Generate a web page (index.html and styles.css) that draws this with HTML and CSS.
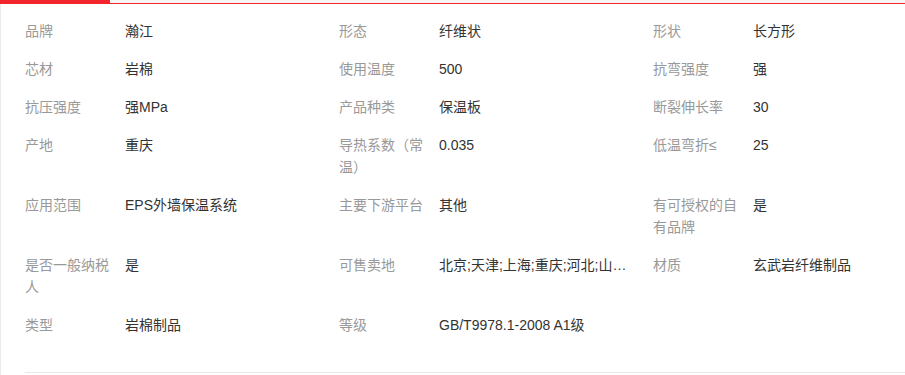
FILE: index.html
```html
<!DOCTYPE html>
<html lang="zh-CN">
<head>
  <meta charset="UTF-8" />
  <meta name="viewport" content="width=device-width, initial-scale=1.0" />
  <title>产品参数</title>
  <link rel="stylesheet" href="styles.css">
</head>
<body>
  <div class="tabs">
    <div class="tab-active"></div>
    <div class="tab-rest"></div>
  </div>

  <div class="panel">
    <div class="attrs">
      <div class="attr"><span class="attr-name">品牌</span><span class="attr-value">瀚江</span></div>
      <div class="attr"><span class="attr-name">形态</span><span class="attr-value">纤维状</span></div>
      <div class="attr"><span class="attr-name">形状</span><span class="attr-value">长方形</span></div>

      <div class="attr"><span class="attr-name">芯材</span><span class="attr-value">岩棉</span></div>
      <div class="attr"><span class="attr-name">使用温度</span><span class="attr-value">500</span></div>
      <div class="attr"><span class="attr-name">抗弯强度</span><span class="attr-value">强</span></div>

      <div class="attr"><span class="attr-name">抗压强度</span><span class="attr-value">强MPa</span></div>
      <div class="attr"><span class="attr-name">产品种类</span><span class="attr-value">保温板</span></div>
      <div class="attr"><span class="attr-name">断裂伸长率</span><span class="attr-value">30</span></div>

      <div class="attr"><span class="attr-name">产地</span><span class="attr-value">重庆</span></div>
      <div class="attr"><span class="attr-name">导热系数（常温）</span><span class="attr-value">0.035</span></div>
      <div class="attr"><span class="attr-name">低温弯折≤</span><span class="attr-value">25</span></div>

      <div class="attr"><span class="attr-name">应用范围</span><span class="attr-value">EPS外墙保温系统</span></div>
      <div class="attr"><span class="attr-name">主要下游平台</span><span class="attr-value">其他</span></div>
      <div class="attr"><span class="attr-name">有可授权的自有品牌</span><span class="attr-value">是</span></div>

      <div class="attr"><span class="attr-name">是否一般纳税人</span><span class="attr-value">是</span></div>
      <div class="attr"><span class="attr-name">可售卖地</span><span class="attr-value one-line" title="北京;天津;上海;重庆;河北;山西;内蒙古">北京;天津;上海;重庆;河北;山西;内蒙古</span></div>
      <div class="attr"><span class="attr-name">材质</span><span class="attr-value">玄武岩纤维制品</span></div>

      <div class="attr"><span class="attr-name">类型</span><span class="attr-value">岩棉制品</span></div>
      <div class="attr"><span class="attr-name">等级</span><span class="attr-value">GB/T9978.1-2008 A1级</span></div>
    </div>
  </div>
</body>
</html>
```

FILE: styles.css
```css
body {
  margin: 0;
  font-family: "Liberation Sans", "Noto Sans CJK SC", sans-serif;
  font-size: 14px;
  background: #fff;
  overflow: hidden;
}

/* tab strip */
.tabs {
  display: flex;
  height: 4px;
}
.tab-active {
  width: 110px;
  background: #f1252b;
}
.tab-rest {
  flex: 1;
  background: #f5f5f5;
  border-bottom: 1px solid #f1252b;
  box-sizing: border-box;
}

.panel {
  border-left: 1px solid #ebebeb;
  padding-top: 16px;
  height: 371px;
  box-sizing: border-box;
}

.attrs {
  display: grid;
  grid-template-columns: 314px 314px 1fr;
  row-gap: 16px;
  margin-left: 24px;
  padding-bottom: 36px;
  border-bottom: 1px solid #e8e8e8;
}

.attr {
  display: flex;
  line-height: 22px;
}
.attr-name {
  width: 90px;
  padding-right: 10px;
  flex-shrink: 0;
  color: #999;
}
.attr-value {
  color: #333;
  max-width: 200px;
}
/* long lists are cut to a single line */
.one-line {
  max-width: 188px;
  white-space: nowrap;
  overflow: hidden;
  text-overflow: ellipsis;
}
```
